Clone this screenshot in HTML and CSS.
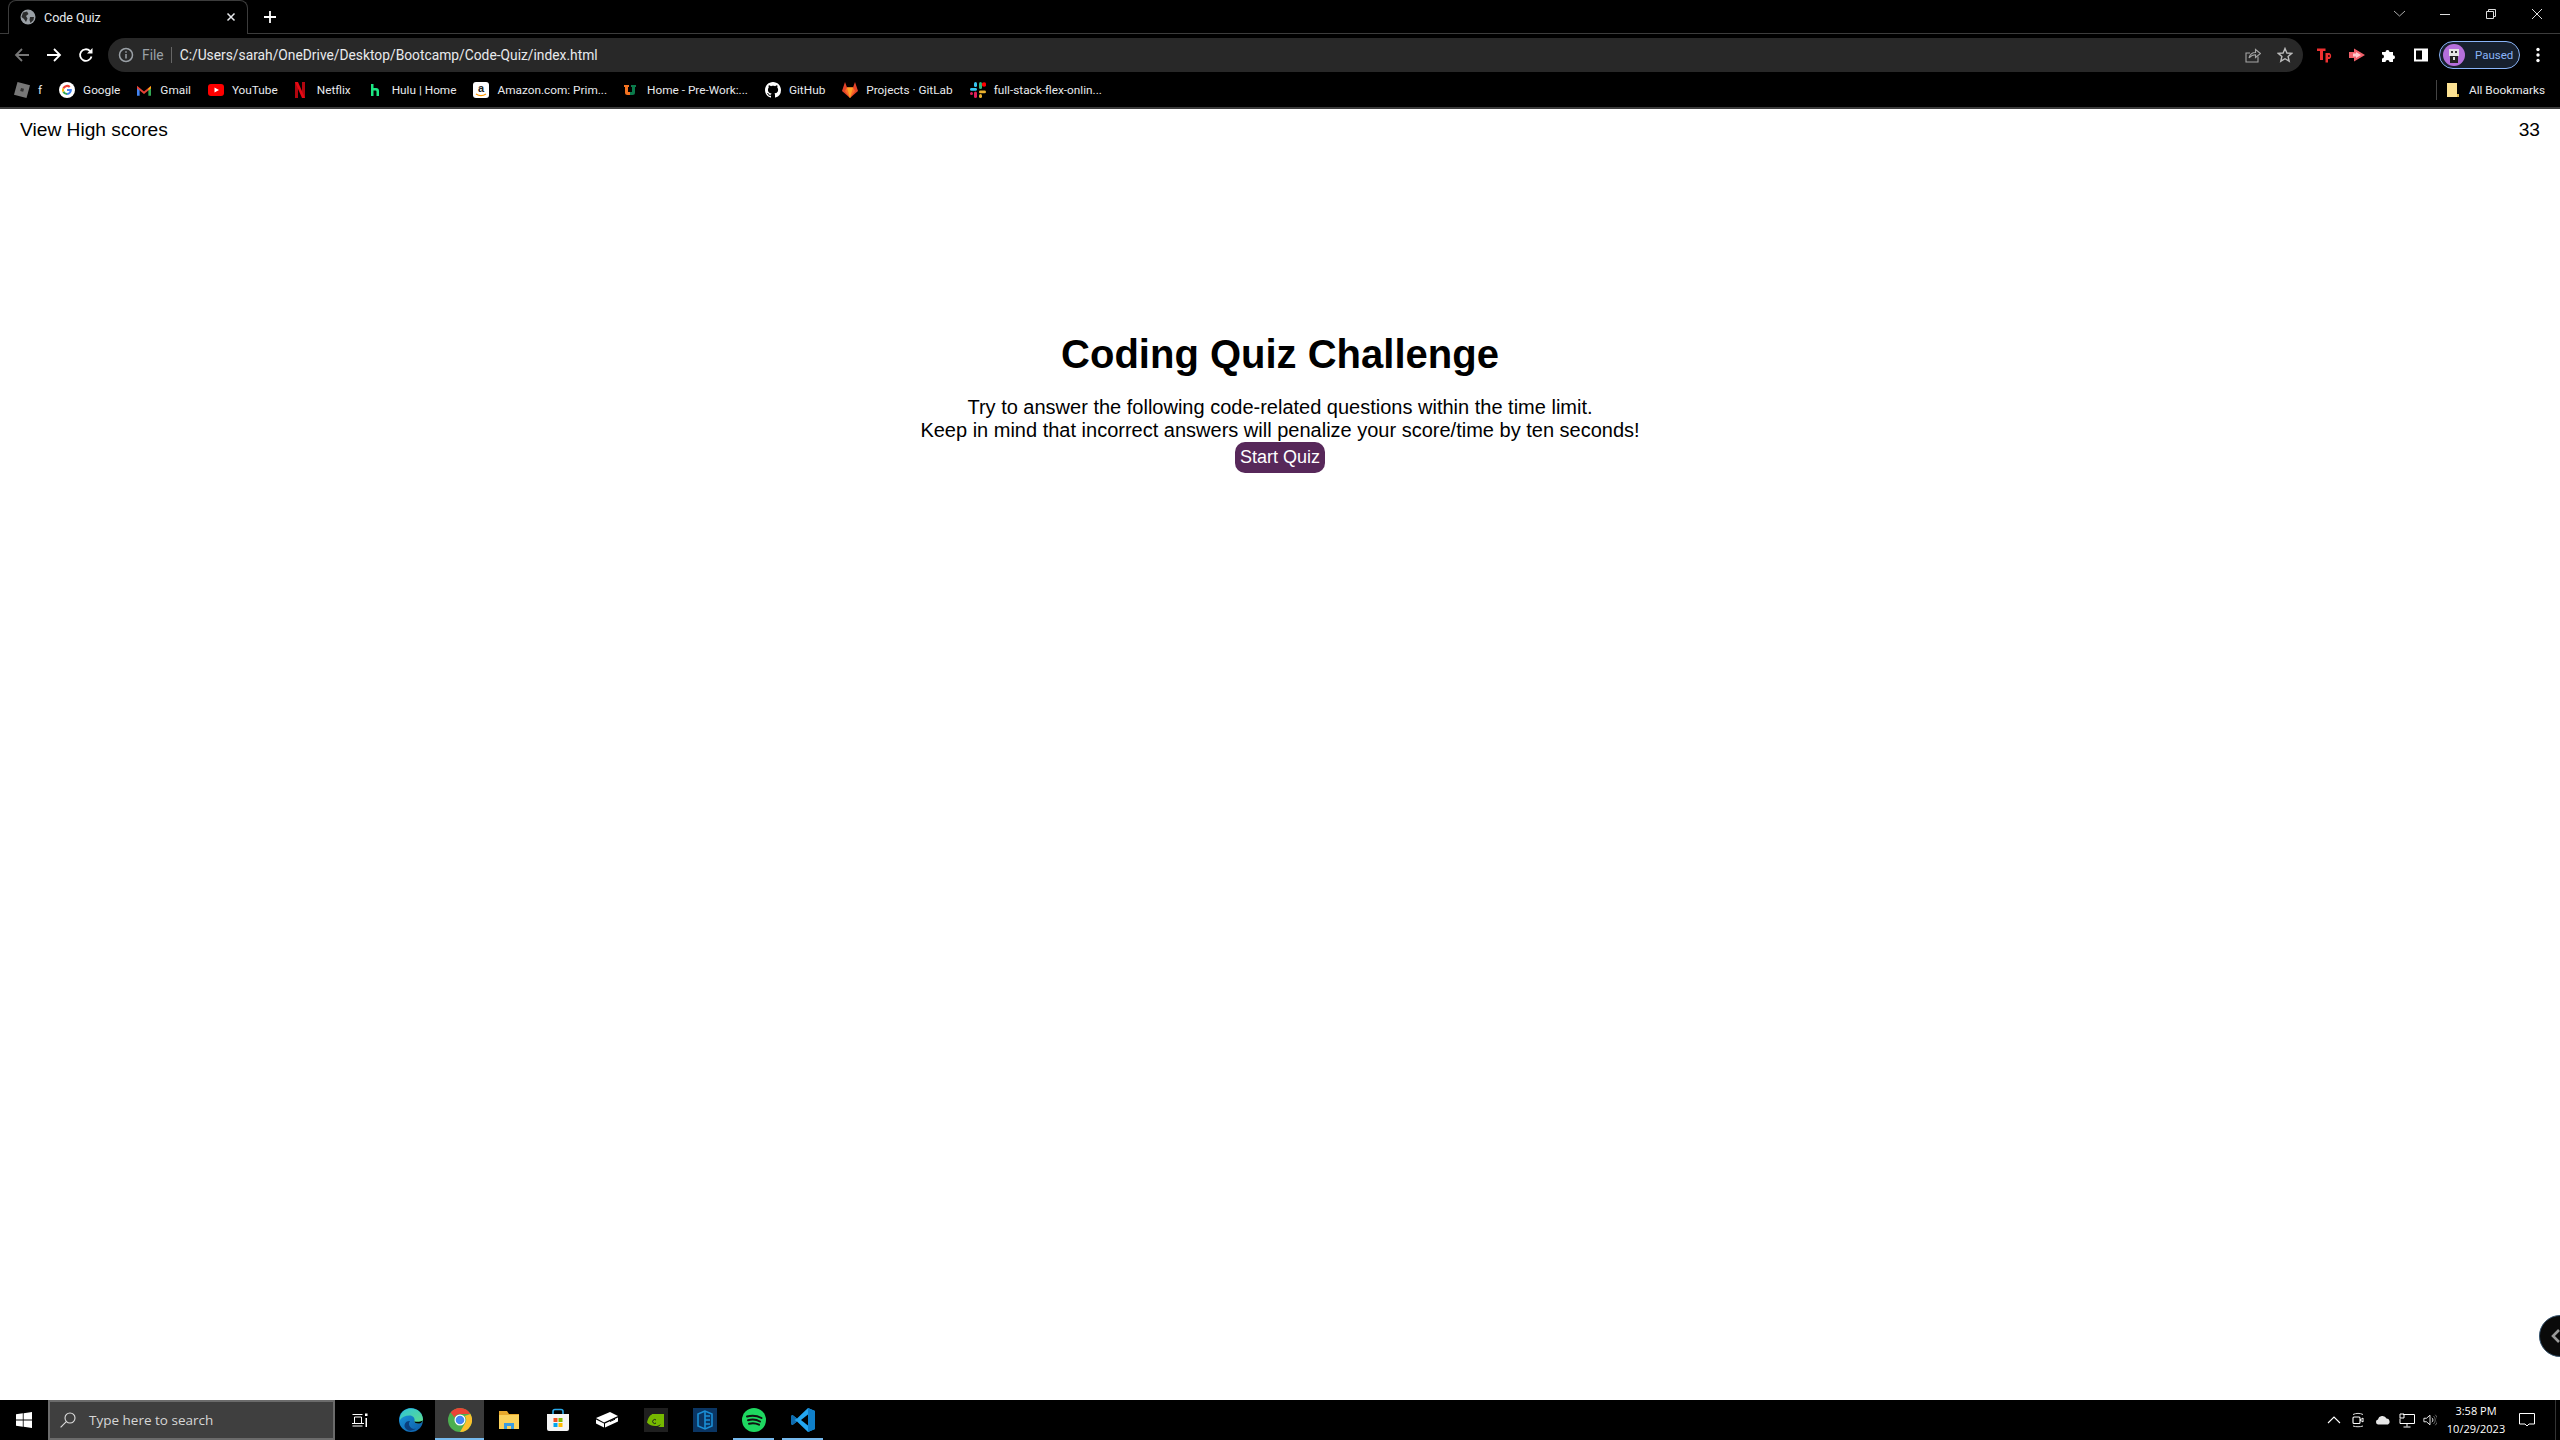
FILE: index.html
```html
<!DOCTYPE html>
<html lang="en">
<head>
<meta charset="utf-8">
<title>Code Quiz</title>
<link rel="stylesheet" href="styles.css">
</head>
<body>
<div class="screen">
  <header class="browser">
    <div class="tabstrip">
      <div class="tab">
        <svg class="ico16" viewBox="0 0 16 16"><circle cx="8" cy="8" r="7.5" fill="#9aa0a6"/><path d="M3 3.5 7 2.5 8.5 5 6 7 7.5 9.5 6 13 4 10 1.5 8ZM10 8h4l-.5 3-3 3-1-3Z" fill="#2b2b2b"/></svg>
        <span class="tab-title">Code Quiz</span>
        <svg class="tab-close" viewBox="0 0 10 10"><path d="M1.5 1.5l7 7M8.5 1.5l-7 7" stroke="#e8eaed" stroke-width="1.5"/></svg>
      </div>
      <svg class="newtab" viewBox="0 0 12 12"><path d="M6 0v12M0 6h12" stroke="#fff" stroke-width="1.8"/></svg>
      <div class="winctl">
        <svg class="winbtn" viewBox="0 0 46 14"><path d="M18 4l5.500 5 5.500-5" fill="none" stroke="#aaa" stroke-width="1"/></svg>
        <svg class="winbtn" viewBox="0 0 46 14"><path d="M18 7.500h10" stroke="#ddd" stroke-width="1"/></svg>
        <svg class="winbtn" viewBox="0 0 46 14"><path d="M18.500 4.500h7v7h-7zM20.500 4.500v-2h7v7h-2" fill="none" stroke="#ddd" stroke-width="1"/></svg>
        <svg class="winbtn" viewBox="0 0 46 14"><path d="M18 2l10 10M28 2 18 12" stroke="#ddd" stroke-width="1"/></svg>
      </div>
    </div>
    <div class="toolbar">
      <div class="navbtn"><svg class="ico16" viewBox="0 0 16 16"><path d="M15 8H2M8 2 2 8l6 6" fill="none" stroke="#777" stroke-width="1.800"/></svg></div>
      <div class="navbtn"><svg class="ico16" viewBox="0 0 16 16"><path d="M1 8h13M8 2l6 6-6 6" fill="none" stroke="#fff" stroke-width="1.800"/></svg></div>
      <div class="navbtn"><svg class="ico16" viewBox="0 0 16 16"><path d="M13.500 9.500A5.800 5.800 0 1 1 12 4" fill="none" stroke="#fff" stroke-width="1.800"/><path d="M14.500 1v5.500H9z" fill="#fff"/></svg></div>
      <div class="omnibox">
        <svg class="ico16" viewBox="0 0 16 16"><circle cx="8" cy="8" r="6.500" fill="none" stroke="#9aa0a6" stroke-width="1.500"/><path d="M8 7v4.500M8 4.300v1.500" stroke="#9aa0a6" stroke-width="1.500"/></svg>
        <span class="scheme">File</span>
        <span class="omni-sep"></span>
        <span class="url">C:/Users/sarah/OneDrive/Desktop/Bootcamp/Code-Quiz/index.html</span>
        <svg class="ico16 share" viewBox="0 0 16 16"><path d="M13 9.500V15H1V6h4" fill="none" stroke="#a5a5a5" stroke-width="1.100"/><path d="M4 11C5 7 8 5.500 10.500 5.500V2.500L15.500 6.500 10.500 10.500V7.800C8 7.800 6 8.800 4 11Z" fill="none" stroke="#a5a5a5" stroke-width="1.100"/></svg>
        <svg class="ico16" viewBox="0 0 16 16"><path d="M8 1.500 9.900 6l4.800.4-3.600 3.100 1.100 4.700L8 11.700l-4.200 2.500 1.100-4.700L1.300 6.400 6.100 6Z" fill="none" stroke="#bbb" stroke-width="1.400"/></svg>
      </div>
      <div class="extbtn"><svg class="ico16" viewBox="0 0 16 16"><path d="M0 1.500h8.500V4H6v9H3V4H0ZM8.500 6h4A3.500 3.500 0 0 1 12.500 12H11v3.500H8.500ZM11 8.300v1.500h1.200a.75.75 0 0 0 0-1.500Z" fill="#ee3030"/></svg></div>
      <div class="extbtn"><svg class="ico16" viewBox="0 0 16 16"><path d="M0 5h5V1.500L16 8 5 14.500V11H0Z" fill="#f0606a"/><path d="M4 6.500h3V5l5 3-5 3V9.500H4Z" fill="#ffc9cd"/></svg></div>
      <div class="extbtn"><svg class="ico16" viewBox="0 0 16 16"><path d="M1 5h3.500a2 2 0 1 1 4 0H12v3.200a2 2 0 1 1 0 4V15H8.500a2 2 0 1 0-4 0H1v-3.500a2 2 0 1 0 0-4Z" fill="#fff"/></svg></div>
      <div class="extbtn"><svg class="ico16" viewBox="0 0 16 16"><path d="M1 1.500h14v13H1z" fill="#fff"/><path d="M3 3.500h6v9H3z" fill="#000"/></svg></div>
      <div class="profile">
        <svg class="avatar" viewBox="0 0 22 22"><circle cx="11" cy="11" r="11" fill="#b56fdc"/><path d="M6 5h10v7H6z" fill="#e4e4e4"/><path d="M8 7h2v2H8zM12 7h2v2h-2z" fill="#333"/><path d="M7 12h8v7H7z" fill="#222"/><path d="M10 13h2v3h-2z" fill="#ddd"/></svg>
        <span class="paused">Paused</span>
      </div>
      <svg class="dots" viewBox="0 0 4 16"><circle cx="2" cy="2.500" r="1.700" fill="#fff"/><circle cx="2" cy="8" r="1.700" fill="#fff"/><circle cx="2" cy="13.500" r="1.700" fill="#fff"/></svg>
    </div>
    <nav class="bookmarks">
      <a class="bm"><svg class="ico16" viewBox="0 0 16 16"><path d="M3.500 0 16 3.300 12.500 16 0 12.700Z" fill="#777"/><path d="M7 6l3 .8-.8 3-3-.8Z" fill="#333"/></svg><span>f</span></a>
      <a class="bm"><svg class="ico16" viewBox="0 0 16 16"><circle cx="8" cy="8" r="8" fill="#fff"/><path d="M12.800 7H8v2.100h2.700a2.900 2.900 0 0 1-2.700 1.900V13a5 5 0 0 0 4.800-6Z" fill="#4285f4"/><path d="M8 11a3 3 0 0 1-2.800-2L3.500 10.200A5 5 0 0 0 8 13Z" fill="#34a853"/><path d="M5.200 9a3 3 0 0 1 0-2L3.500 5.700a5 5 0 0 0 0 4.500Z" fill="#fbbc05"/><path d="M5.200 7A3 3 0 0 1 10 5.800l1.500-1.500A5 5 0 0 0 3.500 5.700Z" fill="#ea4335"/></svg><span>Google</span></a>
      <a class="bm bm-gmail"><svg class="ico-m" viewBox="0 0 16 14"><path d="M0 3v10h3V5Z" fill="#4285f4"/><path d="M13 5v8h3V3Z" fill="#34a853"/><path d="M0 1.500 8 8l8-6.500v3L8 11 0 4.500Z" fill="#ea4335"/><path d="M13 4.800 16 2v2.500L13 7Z" fill="#fbbc05"/></svg><span>Gmail</span></a>
      <a class="bm"><svg class="ico16" viewBox="0 0 16 16"><rect y="2" width="16" height="12" rx="3" fill="#f00"/><path d="M6.500 5.500 11 8l-4.500 2.500Z" fill="#fff"/></svg><span>YouTube</span></a>
      <a class="bm bm-netflix"><svg class="ico-n" viewBox="0 0 10 16"><path d="M0 0h3v16H0ZM7 0h3v16H7Z" fill="#b1060f"/><path d="M0 0h3l7 16H7Z" fill="#e50914"/></svg><span>Netflix</span></a>
      <a class="bm bm-hulu"><svg class="ico-h" viewBox="0 0 8 12"><path d="M0 0h2.500v4H5a3 3 0 0 1 3 3v5H5.500V7.500a1 1 0 0 0-1-1h-2V12H0Z" fill="#1ce783"/></svg><span>Hulu | Home</span></a>
      <a class="bm"><svg class="ico16" viewBox="0 0 16 16"><rect width="16" height="16" rx="3" fill="#fff"/><text class="amz" x="8" y="10" text-anchor="middle">a</text><path d="M3 12c3 2 7 2 10 0" fill="none" stroke="#f90" stroke-width="1.300"/></svg><span>Amazon.com: Prim...</span></a>
      <a class="bm bm-home"><svg class="ico-u" viewBox="0 0 12 12"><path d="M0 1h5v2H4v5h2v3H3.500A2.500 2.500 0 0 1 1 8.500V3H0Z" fill="#f47321"/><path d="M7 1h5v2h-1v5.500A2.500 2.500 0 0 1 8.500 11H6V8h2V3H7Z" fill="#0b7a4b"/></svg><span>Home - Pre-Work:...</span></a>
      <a class="bm"><svg class="ico16" viewBox="0 0 16 16"><path fill="#fff" d="M8 0C3.580 0 0 3.580 0 8c0 3.540 2.290 6.530 5.470 7.590.4.070.55-.17.55-.38 0-.19-.01-.82-.01-1.490-2.010.37-2.530-.49-2.690-.94-.09-.23-.48-.94-.82-1.130-.28-.15-.68-.52-.01-.53.630-.01 1.080.58 1.230.82.720 1.210 1.870.87 2.330.660.070-.52.280-.87.510-1.070-1.780-.2-3.640-.89-3.640-3.950 0-.87.310-1.590.82-2.150-.08-.2-.36-1.020.08-2.120 0 0 .670-.21 2.200.82.640-.18 1.320-.27 2-.27s1.360.09 2 .27c1.530-1.040 2.200-.82 2.200-.82.440 1.100.16 1.920.08 2.120.51.560.82 1.270.82 2.150 0 3.070-1.870 3.750-3.650 3.950.29.250.54.730.54 1.480 0 1.070-.01 1.930-.01 2.200 0 .21.150.46.550.38A8.010 8.010 0 0 0 16 8c0-4.420-3.580-8-8-8Z"/></svg><span>GitHub</span></a>
      <a class="bm"><svg class="ico16" viewBox="0 0 16 16"><path d="M3 0 5 5.500h6L13 0l3 9-8 7-8-7Z" fill="#e24329"/><path d="M5 5.500h6L13 9l-5 7-5-7Z" fill="#fc6d26"/><path d="M5 5.500h6L8 16Z" fill="#fca326"/></svg><span>Projects · GitLab</span></a>
      <a class="bm"><svg class="ico16" viewBox="0 0 16 16"><rect x="0" y="6" width="7" height="2.800" rx="1.400" fill="#36c5f0"/><rect x="4" y="0" width="3" height="5" rx="1.500" fill="#36c5f0"/><rect x="9" y="0" width="3" height="7" rx="1.500" fill="#2eb67d"/><circle cx="14" cy="2.500" r="2.200" fill="#f00"/><rect x="9" y="8.500" width="7" height="2.800" rx="1.400" fill="#ecb22e"/><rect x="9" y="12" width="3" height="4" rx="1.500" fill="#ecb22e"/><rect x="4" y="9.500" width="3" height="6.500" rx="1.500" fill="#e01e5a"/><rect x="0" y="10" width="3" height="3" rx="1.500" fill="#e01e5a"/></svg><span>full-stack-flex-onlin...</span></a>
      <a class="bm all"><svg class="ico-folder" viewBox="0 0 12 14"><path d="M0 0h10v11h2v3H0Z" fill="#fde293"/><path d="M10 11h2v3h-2Z" fill="#d9b44a"/></svg><span>All Bookmarks</span></a>
    </nav>
  </header>

  <main class="page">
    <div class="topline">
      <span>View High scores</span>
      <span>33</span>
    </div>
    <section class="intro">
      <h1>Coding Quiz Challenge</h1>
      <p>Try to answer the following code-related questions within the time limit.<br>Keep in mind that incorrect answers will penalize your score/time by ten seconds!</p>
      <button class="start" type="button">Start Quiz</button>
    </section>
    <div class="float-handle"><svg class="float-chev" viewBox="0 0 10 16"><path d="M8 2 2 8l6 6" fill="none" stroke="#9a9a9a" stroke-width="2.600"/></svg></div>
  </main>

  <footer class="taskbar">
    <div class="start-btn"><svg class="winlogo" viewBox="0 0 16 16"><path d="M0 2.300 6.800 1.300v6.300H0ZM7.600 1.200 16 0v7.600H7.600ZM0 8.400h6.800v6.300L0 13.700ZM7.600 8.400H16V16l-8.400-1.200Z" fill="#fff"/></svg></div>
    <div class="search">
      <svg class="search-ico" viewBox="0 0 16 16"><circle cx="10" cy="6" r="5" fill="none" stroke="#ddd" stroke-width="1.100"/><path d="M6.300 9.700.6 15.400" stroke="#ddd" stroke-width="1.100"/></svg>
      <span>Type here to search</span>
    </div>
    <div class="tb-icons">
      <div class="tb-item"><svg class="tb-ico" viewBox="0 0 16 16"><path d="M.5 2.500h10M.5 14h10M2.500 5h7v6.500h-7z M0 11.500h12" fill="none" stroke="#fff" stroke-width="1"/><path d="M13 1.500h2.500v2.500H13zM13.500 6h1.500v9h-1.500z" fill="#fff"/></svg></div>
      <div class="tb-item"><svg class="tb-ico-lg" viewBox="0 0 24 24"><defs><linearGradient id="edgeA" x1="0" y1="0" x2="1" y2="1"><stop offset="0" stop-color="#1b9de2"/><stop offset="1" stop-color="#0c59a4"/></linearGradient><linearGradient id="edgeB" x1="0" y1="0" x2="1" y2="1"><stop offset="0" stop-color="#2fc4d8"/><stop offset="1" stop-color="#5fdc8a"/></linearGradient></defs><circle cx="12" cy="12" r="12" fill="url(#edgeA)"/><path d="M1 9C3 1 11-1 17 1.500 22 3.500 24 8 24 12c0 2-2 3.500-5 3.500-2.500 0-4-1-3.500-2.500.5-2-.5-5.500-5-5.500C6 7.500 3 9 1 12Z" fill="url(#edgeB)"/><path d="M11 13a5 5 0 0 0 6 7.500c-4 3-9 3-11-1-1.500-3 1-7 5-6.500Z" fill="#0a3f7e"/><path d="M24 12.500c-1 2.500-3 3-5 3-2 0-3.500-1-3.500-2.300C17 14 21 14 24 12.500Z" fill="#000"/></svg></div>
      <div class="tb-item active"><svg class="tb-ico-lg" viewBox="0 0 24 24"><circle cx="12" cy="12" r="12" fill="#4caf50"/><path d="M12 0a12 12 0 0 1 10.400 6H12a6 6 0 0 0-5.500 3.500L2.700 4.500A12 12 0 0 1 12 0Z" fill="#ea4335"/><path d="M22.400 6A12 12 0 0 1 12 24l5.200-9a6 6 0 0 0-.5-7Z" fill="#fbc02d"/><circle cx="12" cy="12" r="5.500" fill="#fff"/><circle cx="12" cy="12" r="4.300" fill="#4285f4"/></svg></div>
      <div class="tb-item"><svg class="tb-ico-lg" viewBox="0 0 24 24"><path d="M2 3h8l2 3h10v15H2Z" fill="#e8a92c"/><path d="M2 7h20v14H2Z" fill="#fbd25c"/><path d="M7 21v-6h10v6h-3v-3h-4v3Z" fill="#3b9ce0"/></svg></div>
      <div class="tb-item"><svg class="tb-ico-lg" viewBox="0 0 24 24"><path d="M7 6V3.500a2 2 0 0 1 2-2h6a2 2 0 0 1 2 2V6" fill="none" stroke="#29a8e8" stroke-width="1.600"/><path d="M1 6h22v15a2 2 0 0 1-2 2H3a2 2 0 0 1-2-2Z" fill="#f4f4f4"/><path d="M7.500 10h4v4h-4z" fill="#f25022"/><path d="M12.500 10h4v4h-4z" fill="#7fba00"/><path d="M7.500 15h4v4h-4z" fill="#00a4ef"/><path d="M12.500 15h4v4h-4z" fill="#ffb900"/></svg></div>
      <div class="tb-item"><svg class="tb-ico-lg" viewBox="0 0 24 24"><path d="M1 10 15 4l8 4-14 6.500Z" fill="#fff"/><path d="M1 11.500 9 15.500v4l-8-4ZM10 15.500l13-6v4l-13 6Z" fill="#fff"/><path d="M15 13.500l5-2.300" stroke="#000"/></svg></div>
      <div class="tb-item"><svg class="tb-ico-lg" viewBox="0 0 24 24"><path d="M0 0h24v24H0z" fill="#1f1f1f"/><path d="M8 6H20v13H14c4-2 3-6 .5-7.500-2-1-4-.5-5 1 1-2 3-3 5-2 4 2 4 5 0 7-3 1-8 1-11.500-3C4 10 6 7 8 6.500Z" fill="#76b900"/><path d="M12 12a2 2 0 1 0 0 3" fill="none" stroke="#1f1f1f"/></svg></div>
      <div class="tb-item"><svg class="tb-ico-lg" viewBox="0 0 24 24"><path d="M0 0h24v24H0z" fill="#0a3563"/><path d="M12 3 5 6v12l7 3 7-3V6Z" fill="none" stroke="#1b8fd6" stroke-width="1.600"/><path d="M12 3v18M12 8h5M12 12h5M12 16h5" fill="none" stroke="#1b8fd6" stroke-width="1.600"/></svg></div>
      <div class="tb-item running"><svg class="tb-ico-lg" viewBox="0 0 24 24"><circle cx="12" cy="12" r="12" fill="#1ed760"/><path d="M5 8.500c5-1.500 10-1 14.500 1.500M6 12.200c4-1.200 8.500-.8 12 1.300M7 15.700c3.500-.9 7-.6 10 1" fill="none" stroke="#111" stroke-width="2" stroke-linecap="round"/></svg></div>
      <div class="tb-item running"><svg class="tb-ico-lg" viewBox="0 0 24 24"><path d="M17 0 24 3v18l-7 3-11-10.500L1.500 17 0 16V8l1.500-1 4.500 3.500Z" fill="#23a6f0"/><path d="M17 6.500 10 12l7 5.500Z" fill="#000"/><path d="M17 0 24 3v18l-7 3Z" fill="#0f7fc9"/><path d="M0 8l1.500-1L6 10.500 3.500 12 6 13.500 1.500 17 0 16Z" fill="#0f6cae"/></svg></div>
    </div>
    <div class="tray">
      <svg class="tray-ico" viewBox="0 0 14 14"><path d="M1 10l6-6 6 6" fill="none" stroke="#fff" stroke-width="1.100"/></svg>
      <svg class="tray-ico" viewBox="0 0 14 16"><path d="M2 2.500C5 1 9 1 12 2.500M2 14c3 1 7 1 10 0" fill="none" stroke="#ddd"/><rect x="2" y="5" width="7" height="6.500" rx="1" fill="none" stroke="#fff" stroke-width="1.100"/><path d="M9 8l3-2v4z" fill="none" stroke="#fff"/></svg>
      <svg class="tray-wide" viewBox="0 0 16 10"><path d="M3 9.500A2.500 2.500 0 0 1 3 4.600 4.500 4.500 0 0 1 11.500 3.500 3.200 3.200 0 0 1 13 9.500Z" fill="#e6e6e6"/></svg>
      <svg class="tray-wide2" viewBox="0 0 16 15"><path d="M4 1.500h11.500v9H1V5.500" fill="none" stroke="#fff"/><path d="M1 1h4v4H1zM8 10.500v3M4.500 14h7" fill="none" stroke="#fff"/></svg>
      <svg class="tray-ico tray-last" viewBox="0 0 16 16"><path d="M1 6h3l4-3.500v11L4 10H1Z" fill="none" stroke="#fff"/><path d="M10 5.500a3 3 0 0 1 0 5" fill="none" stroke="#fff"/><path d="M12 3.500a6 6 0 0 1 0 9M14 2a8 8 0 0 1 0 12" fill="none" stroke="#777"/></svg>
      <div class="clock"><span>3:58 PM</span><span>10/29/2023</span></div>
      <svg class="notify" viewBox="0 0 16 16"><path d="M.5 1.500h15V12H10l-2 2-2-2H.5Z" fill="none" stroke="#fff"/></svg>
      <div class="show-desktop"></div>
    </div>
  </footer>
</div>
</body>
</html>
```
FILE: styles.css
```css
* { box-sizing: border-box; }
html, body { margin: 0; padding: 0; background: #fff; }
.screen { width: 2560px; height: 1440px; display: flex; flex-direction: column; overflow: hidden; font-family: Arial, "Liberation Sans", sans-serif; }
svg { display: block; flex: none; }
.ico16 { width: 16px; height: 16px; }

.browser { background: #000; color: #fff; font-family: Roboto, "Open Sans", sans-serif; }
.tabstrip { height: 34px; display: flex; align-items: center; padding-left: 8px; border-bottom: 1px solid #3c3c3c; }
.tab { width: 240px; height: 34px; margin-bottom: -1px; align-self: flex-start; background: #000; border: 1px solid #3c3c3c; border-bottom: 0; border-radius: 8px 8px 0 0; display: flex; align-items: center; padding: 0 8px 1px 11px; gap: 8px; }
.tab-title { flex: 1; font-size: 12.500px; color: #e8eaed; }
.tab-close { width: 10px; height: 10px; margin-right: 3px; }
.newtab { width: 12px; height: 12px; margin-left: 16px; }
.winctl { margin-left: auto; display: flex; align-self: flex-start; padding: 7px 0 0; }
.winbtn { width: 46px; height: 14px; }

.toolbar { height: 41px; display: flex; align-items: center; padding-left: 6px; }
.navbtn, .extbtn { width: 32px; height: 32px; display: flex; align-items: center; justify-content: center; flex: none; }
.omnibox { flex: none; width: 2195px; height: 34px; margin: 0 6px; background: #282828; border-radius: 17px; display: flex; align-items: center; padding: 0 10px; font-size: 13.800px; }
.scheme { color: #9aa0a6; margin-left: 8px; }
.omni-sep { width: 1px; height: 16px; background: #666; margin: 0 8px 0 7px; }
.url { color: #e8eaed; flex: 1; }
.share { margin-right: 16px; }
.profile { width: 81px; height: 28px; margin-left: 2px; flex: none; border: 1px solid #8ab4f8; border-radius: 14px; background: #17202e; display: flex; align-items: center; padding-left: 3px; gap: 10px; }
.avatar { width: 22px; height: 22px; }
.paused { color: #8ab4f8; font-size: 11.500px; }
.dots { width: 4px; height: 16px; margin-left: 16px; }

.bookmarks { height: 34px; display: flex; align-items: center; padding: 0 15px 2px 14px; border-bottom: 2px solid #3c3c3c; font-size: 11.800px; }
.bm { display: flex; align-items: center; gap: 8px; margin-right: 17px; color: #e8eaed; white-space: nowrap; }
.bm-gmail { gap: 9px; }
.bm-netflix { gap: 12px; }
.bm-hulu { gap: 13px; margin-left: 3px; }
.bm-home { gap: 11px; }
.ico-m { width: 14px; height: 13px; }
.ico-n { width: 10px; height: 16px; }
.ico-h { width: 8px; height: 12px; }
.ico-u { width: 12px; height: 12px; }
.ico-folder { width: 12px; height: 14px; }
.amz { font: bold 11px Arial, "Liberation Sans", sans-serif; fill: #222; }
.all { margin-left: auto; margin-right: 0; border-left: 1px solid #444; padding-left: 10px; gap: 10px; height: 20px; }

.page { flex: 1; position: relative; background: #fff; color: #000; }
.topline { display: flex; justify-content: space-between; padding: 9px 20px 0; font-size: 19.200px; line-height: 23px; }
.intro { text-align: center; padding-top: 190px; font-size: 20px; line-height: 23px; }
h1 { font-size: 40px; line-height: 46px; font-weight: bold; margin: 0; }
.intro p { margin: 19px 0 0; }
.start { display: block; margin: 0 auto; width: 90px; height: 31px; padding: 0; border: 0; border-radius: 10px; background: #57285a; color: #fff; font: 18px/23px Arial, "Liberation Sans", sans-serif; }
.float-handle { position: absolute; left: 2539px; top: 1206px; width: 42px; height: 42px; border-radius: 50%; background: #0a0a0a; border: 1px solid #32506a; padding: 12px 0 0 11px; }
.float-chev { width: 10px; height: 16px; }

.taskbar { height: 40px; background: #000; display: flex; align-items: stretch; color: #fff; font-family: "Open Sans", Roboto, sans-serif; }
.start-btn { width: 48px; display: flex; align-items: center; justify-content: center; }
.winlogo { width: 16px; height: 16px; }
.search { width: 287px; background: #3f3f3f; border: 2px solid #6b6b6b; display: flex; align-items: center; padding-left: 10px; gap: 13px; font-size: 13.500px; color: #d6d6d6; }
.search-ico { width: 16px; height: 16px; }
.tb-icons { display: flex; }
.tb-item { width: 49px; display: flex; align-items: center; justify-content: center; border-bottom: 2px solid transparent; padding-top: 2px; }
.tb-item:first-child { margin-right: 2px; }
.tb-item.active { background: #3a3a3a; border-bottom-color: #76b9ed; }
.tb-item.running { position: relative; }
.tb-item.running::after { content: ""; position: absolute; left: 4px; right: 4px; bottom: -2px; height: 2px; background: #76b9ed; }
.tb-ico { width: 16px; height: 16px; }
.tb-ico-lg { width: 24px; height: 24px; }
.tray { margin-left: auto; display: flex; align-items: center; }
.tray-ico { width: 14px; height: 16px; margin-right: 10px; }
.tray-last { margin-right: 6px; }
.tray-wide { width: 16px; height: 10px; margin-right: 8px; }
.tray-wide2 { width: 16px; height: 15px; margin-right: 8px; }
.clock { width: 66px; display: flex; flex-direction: column; align-items: center; font-size: 11px; line-height: 18px; }
.notify { width: 16px; height: 16px; margin: 0 20px 0 10px; }
.show-desktop { width: 1px; height: 40px; background: #333; margin-right: 4px; }
```
